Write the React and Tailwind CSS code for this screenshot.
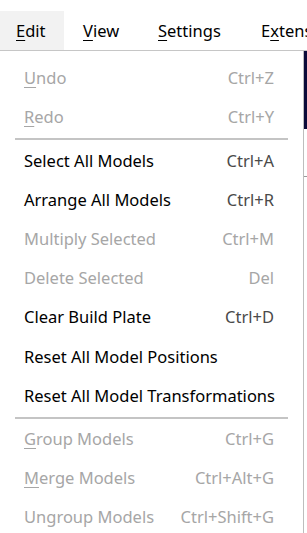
import React from "react";

const items = [
  { label: "Undo", u: 0, sc: "Ctrl+Z", dis: true },
  { label: "Redo", u: 0, sc: "Ctrl+Y", dis: true },
  { sep: true },
  { label: "Select All Models", sc: "Ctrl+A" },
  { label: "Arrange All Models", sc: "Ctrl+R" },
  { label: "Multiply Selected", sc: "Ctrl+M", dis: true },
  { label: "Delete Selected", sc: "Del", dis: true },
  { label: "Clear Build Plate", sc: "Ctrl+D" },
  { label: "Reset All Model Positions" },
  { label: "Reset All Model Transformations" },
  { sep: true },
  { label: "Group Models", u: 0, sc: "Ctrl+G", dis: true },
  { label: "Merge Models", u: 0, sc: "Ctrl+Alt+G", dis: true },
  { label: "Ungroup Models", sc: "Ctrl+Shift+G", dis: true },
];

function Label({ text, u }) {
  if (u === undefined) return <span>{text}</span>;
  return (
    <span>
      <span className="underline underline-offset-[3px]">{text[u]}</span>
      {text.slice(u + 1)}
    </span>
  );
}

export default function App() {
  return (
    <div
      className="w-[307px] h-[533px] bg-white overflow-hidden text-black"
      style={{ fontFamily: '"Noto Sans", "Open Sans", sans-serif' }}
    >
      <div className="h-[11px] overflow-hidden">
        <div className="text-[16px] leading-[20px] -mt-[16px] -ml-[30px] whitespace-nowrap">
          Printer Card
        </div>
      </div>
      <div className="flex h-[40px] items-center pt-[2px] text-[16.5px] border-b border-[#c6c6c6] whitespace-nowrap">
        <div className="w-[64px] shrink-0 -mt-[2px] h-[39px] bg-[#f2f2f2] flex items-center pt-[2px] pl-[16px]">
          <span>
            <span className="underline underline-offset-[3px]">E</span>dit
          </span>
        </div>
        <div className="pl-[19px] w-[75px] shrink-0">
          <span className="underline underline-offset-[3px]">V</span>iew
        </div>
        <div className="pl-[19px] w-[122px] shrink-0">
          <span className="underline underline-offset-[3px]">S</span>ettings
        </div>
        <div className="shrink-0">
          E<span className="underline underline-offset-[3px]">x</span>tensions
        </div>
      </div>
      <div className="flex">
        <div className="w-[304px] shrink-0 border-r border-[#bdbdbd] pt-[8px] h-[483px]">
          {items.map((it, i) =>
            it.sep ? (
              <div key={i} className="h-[4px] flex items-center px-[15px]">
                <div className="h-[2px] w-full bg-[#c4c4c4]" />
              </div>
            ) : (
              <div
                key={i}
                className={
                  "h-[39.2px] flex items-center justify-between pl-[24px] pr-[29px] text-[16.5px] whitespace-nowrap " +
                  (it.dis ? "text-[#a6a6a6]" : "text-black")
                }
              >
                <Label text={it.label} u={it.u} />
                {it.sc && (
                  <span className={it.dis ? "text-[#a6a6a6]" : "text-[#4a4a4a]"}>
                    {it.sc}
                  </span>
                )}
              </div>
            )
          )}
        </div>
        <div className="flex-1 flex flex-col">
          <div className="h-[78px] bg-[#0b0b3a]" />
          <div className="h-[47px]" />
          <div className="h-px w-full bg-[#999]" />
        </div>
      </div>
    </div>
  );
}
